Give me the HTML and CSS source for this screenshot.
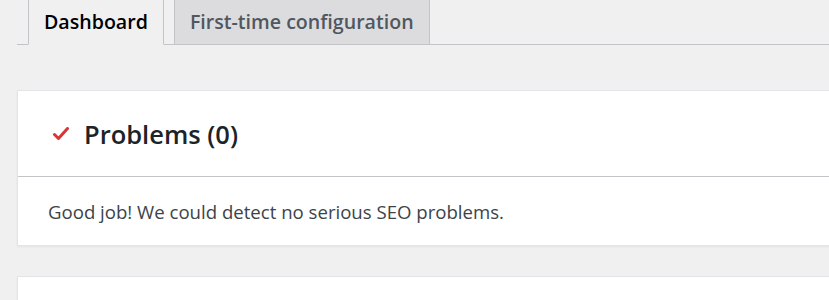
FILE: index.html
```html
<!DOCTYPE html>
<html lang="en">
<head>
  <meta charset="UTF-8">
  <meta name="viewport" content="width=device-width, initial-scale=1.0">
  <title>SEO dashboard</title>
  <link rel="stylesheet" href="styles.css">
</head>
<body>
  <div class="wrap">
    <nav class="nav-tabs">
      <a class="nav-tab active" href="#">Dashboard</a>
      <a class="nav-tab" href="#">First-time configuration</a>
    </nav>
    <div class="card">
      <div class="card-header">
        <svg class="check" width="16" height="14" viewBox="0 0 16 14">
          <path d="M1.5 7.5 L5.5 11.5 L14.5 1.5" fill="none" stroke="#d63638" stroke-width="3" stroke-linecap="round" stroke-linejoin="round"/>
        </svg>
        <h2>Problems (0)</h2>
      </div>
      <div class="card-body">
        <p>Good job! We could detect no serious SEO problems.</p>
      </div>
    </div>
    <div class="card"></div>
  </div>
</body>
</html>
```
FILE: styles.css
```css
html, body {
  margin: 0;
  padding: 0;
}
body {
  font-family: 'Open Sans', 'Noto Sans', sans-serif;
  background-color: #f0f0f1;
  color: #1d2327;
  overflow: hidden;
}
.wrap {
  margin-left: 17px;
  margin-right: -20px;
}
.nav-tabs {
  display: flex;
  gap: 10px;
  padding-left: 11px;
  margin-top: -6px;
  border-bottom: 1px solid #c3c4c7;
}
.nav-tab {
  display: block;
  height: 51px;
  box-sizing: border-box;
  padding: 0 15px;
  margin-bottom: -1px;
  border: 1px solid #c3c4c7;
  background-color: #dcdcde;
  color: #50575e;
  font-size: 19.6px;
  font-weight: 600;
  line-height: 54px;
  text-decoration: none;
  white-space: nowrap;
}
.nav-tab.active {
  background-color: #f0f0f1;
  border-bottom-color: #f0f0f1;
  color: #000;
}
.card {
  background-color: #fff;
  border: 1px solid #e2e4e7;
  box-shadow: 0 1px 2px rgba(0, 0, 0, 0.05);
  margin-top: 45px;
}
.card + .card {
  margin-top: 30px;
  height: 60px;
}
.card-header {
  display: flex;
  align-items: center;
  height: 85px;
  padding-left: 35px;
  border-bottom: 1px solid #c3c4c7;
}
.check {
  margin-right: 15px;
}
.card-header h2 {
  margin: 0;
  font-size: 25.5px;
  font-weight: 600;
  color: #1d2327;
}
.card-body {
  height: 68px;
  display: flex;
  align-items: center;
  padding-left: 30px;
}
.card-body p {
  margin: 0;
  font-size: 18.6px;
  color: #3c434a;
}
```
